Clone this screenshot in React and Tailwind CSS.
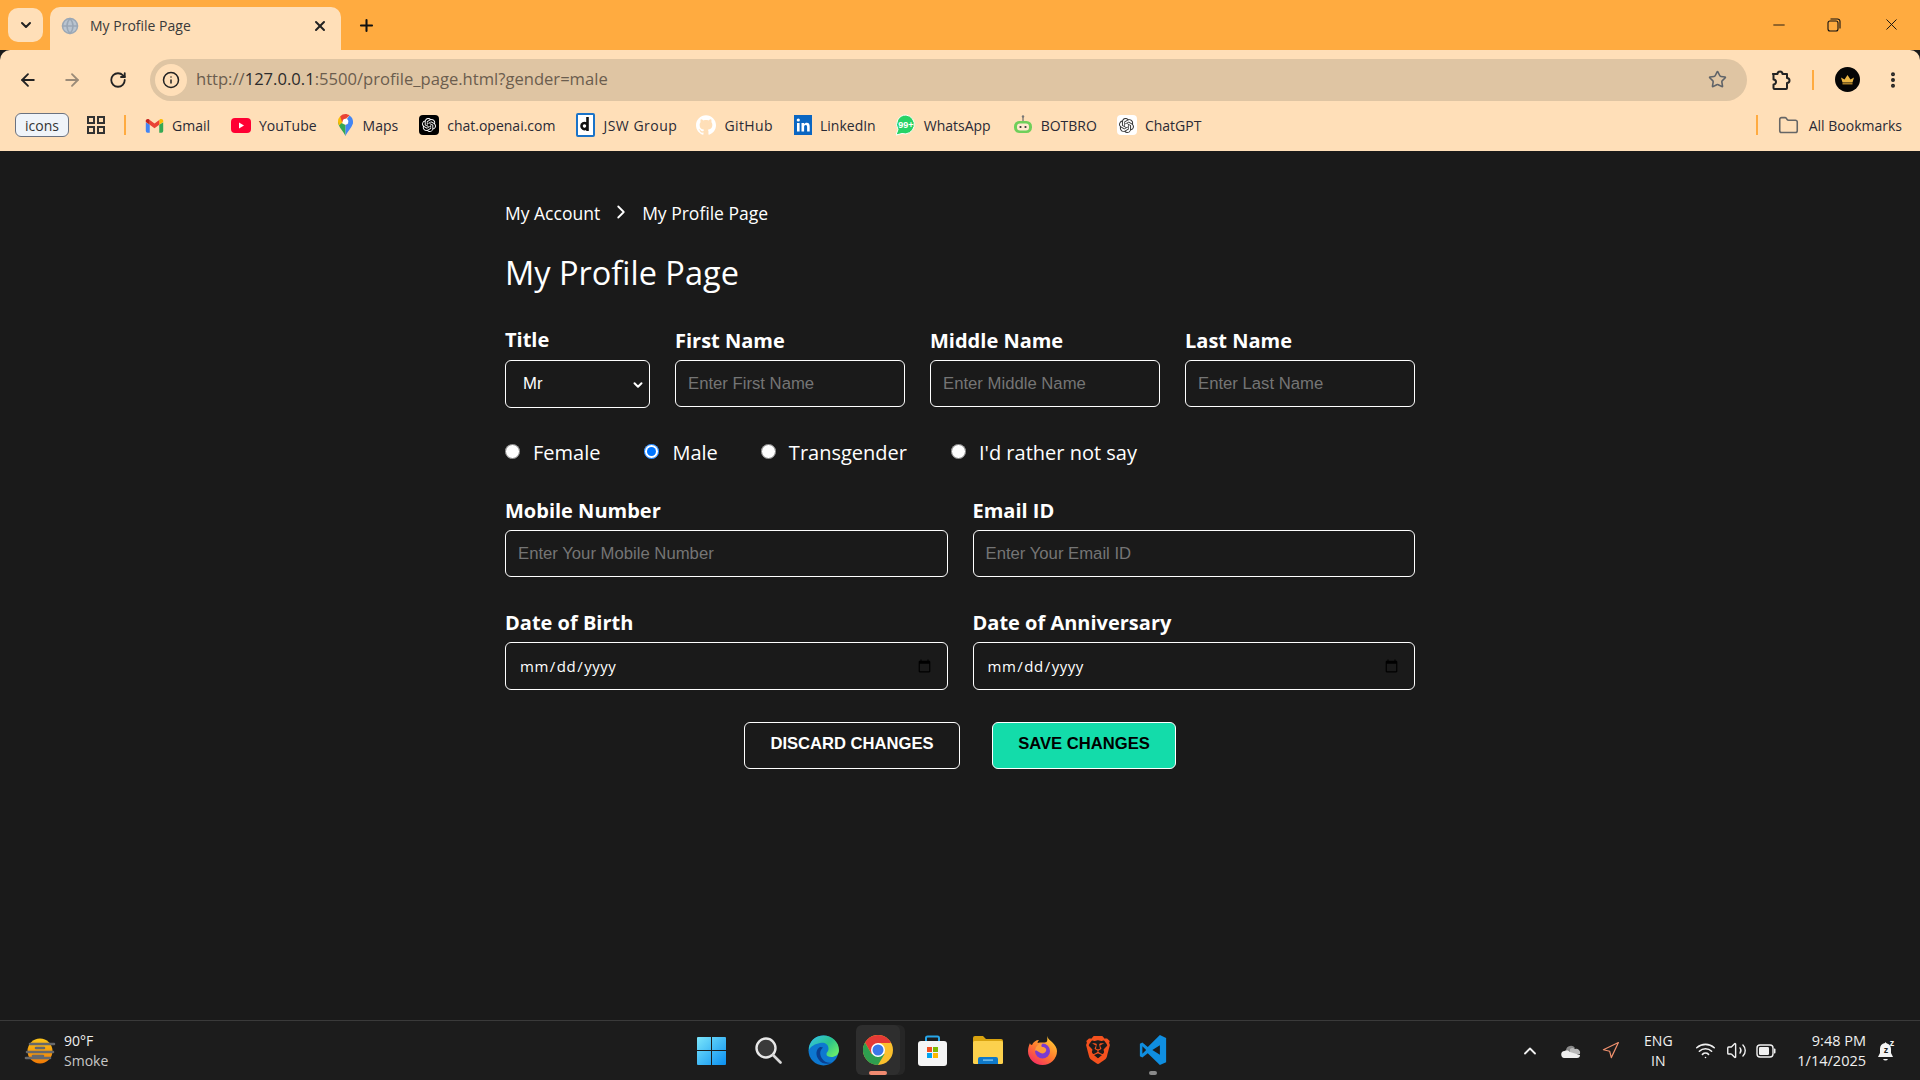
import React from "react";
import { SiOpenai, SiGithub, SiBrave } from "react-icons/si";
import { ArrowLeft, ArrowRight, RotateCw, Info, Star, EllipsisVertical, Folder, ChevronDown, ChevronUp, ChevronRight, X, Plus, Minus, Wifi, Volume2, Navigation, Globe } from "lucide-react";

const sans = "font-['Open_Sans','Noto_Sans',sans-serif]";

function Gmail() {
  return (
    <svg width="19" height="15" viewBox="0 0 24 18">
      <path d="M1 5v11a2 2 0 0 0 2 2h3V8z" fill="#4285f4" />
      <path d="M23 5v11a2 2 0 0 1-2 2h-3V8z" fill="#34a853" />
      <path d="M18 2v6l5-3.5V3c0-2-2.3-3-4-1.8z" fill="#fbbc04" />
      <path d="M6 8V2l6 4.500L18 2v6l-6 4.500z" fill="#ea4335" />
      <path d="M1 3v1.500L6 8V2L5 1.200C3.300 0 1 1 1 3z" fill="#c5221f" />
    </svg>
  );
}
function YouTube() {
  return (
    <svg width="20" height="15" viewBox="0 0 20 15">
      <rect width="20" height="15" rx="4" fill="#ff0033" />
      <path d="M8 4.500l5 3-5 3z" fill="#fff" />
    </svg>
  );
}
function MapsPin() {
  return (
    <svg width="15" height="22" viewBox="0 0 15 22">
      <path d="M7.500 22C6 18 0 13 0 7.500L7.500 11z" fill="#34a853" />
      <path d="M7.500 22c1.500-4 7.500-9 7.500-14.500L7.500 11z" fill="#4285f4" />
      <path d="M2.200 2.200A7.500 7.500 0 0 0 0 7.500c0 1.500.5 2.800 1.200 4L7.500 5z" fill="#fbbc04" />
      <path d="M2.200 2.200A7.500 7.500 0 0 1 7.500 0c1 0 3 .5 4 1.500L4 8z" fill="#ea4335" />
      <path d="M11.500 1.500A7.500 7.500 0 0 1 15 7.500c0 2-1 3.500-2 5L7.500 7z" fill="#4285f4" />
      <circle cx="7.500" cy="7.500" r="2.800" fill="#fff" />
    </svg>
  );
}
function Jsw() {
  return (
    <svg width="19" height="24" viewBox="0 0 19 24">
      <rect x="1" y="1" width="17" height="22" rx="1" fill="#fff" stroke="#1a73c8" strokeWidth="2" />
      <path d="M11.500 4v14M11.500 13a3 3 0 1 0 0 .1" fill="none" stroke="#111" strokeWidth="2.600" />
    </svg>
  );
}
function Linkedin() {
  return (
    <svg width="18" height="20" viewBox="0 0 18 20">
      <rect width="18" height="20" fill="#0a66c2" />
      <rect x="3" y="8" width="2.600" height="8.500" fill="#fff" />
      <circle cx="4.300" cy="5" r="1.600" fill="#fff" />
      <path d="M7.500 8h2.500v1.300c.6-1 1.600-1.500 2.700-1.500 2.300 0 3 1.500 3 3.700v5h-2.600v-4.500c0-1.100-.3-2-1.400-2s-1.600.9-1.600 2v4.500H7.500z" fill="#fff" />
    </svg>
  );
}
function WhatsApp() {
  return (
    <svg width="20" height="22" viewBox="0 0 20 22">
      <path d="M10 1a9.500 9.500 0 0 0-8 14.500L0 21l6-1.500A9.500 9.500 0 1 0 10 1z" fill="#25d366" stroke="#fff" strokeWidth="1" />
      <text x="10" y="14" textAnchor="middle" fontSize="9" fontWeight="700" fill="#fff" fontFamily="Liberation Sans">99+</text>
    </svg>
  );
}
function Botbro() {
  return (
    <svg width="20" height="20" viewBox="0 0 20 20">
      <path d="M10 1v5" stroke="#555" strokeWidth="1" />
      <circle cx="10" cy="1.500" r="1.200" fill="#777" />
      <rect x="1" y="6" width="18" height="12" rx="5.500" fill="#6fcf5a" />
      <rect x="4" y="8.500" width="12" height="7" rx="3" fill="#ffe9cf" />
      <circle cx="7.500" cy="12" r="1.100" fill="#333" />
      <circle cx="12.500" cy="12" r="1.100" fill="#333" />
    </svg>
  );
}
function Crown() {
  return (
    <svg width="25" height="25" viewBox="0 0 25 25">
      <circle cx="12.500" cy="12.500" r="12.500" fill="#050505" />
      <path d="M6 10.500l3.500 2L12.500 8l3 4.500 3.500-2-1.500 5h-10z" fill="#eab543" />
      <rect x="7.500" y="16" width="10" height="1.500" fill="#a87d28" />
    </svg>
  );
}
function ExtensionIcon() {
  return (
    <svg width="22" height="22" viewBox="0 0 22 22" fill="none" stroke="#222" strokeWidth="2" strokeLinejoin="round">
      <path d="M3 5h4.500a2.500 2.500 0 0 1 5 0H17v4a2.500 2.500 0 0 1 0 5v5a1 1 0 0 1-1 1H4.500a1 1 0 0 1-1-1v-3.500a2.500 2.500 0 0 0 0-5V6z" />
    </svg>
  );
}
function Weather() {
  return (
    <svg width="32" height="28" viewBox="0 0 32 28">
      <defs>
        <linearGradient id="sun" x1="0" y1="0" x2="0" y2="1">
          <stop offset="0" stopColor="#fcc419" />
          <stop offset="1" stopColor="#f07a06" />
        </linearGradient>
      </defs>
      <circle cx="16" cy="14" r="12.500" fill="url(#sun)" />
      <g fill="none" stroke="#66686c" strokeWidth="2.600" strokeLinecap="round">
        <path d="M6 7h24M12 11h8" />
        <path d="M3 15h26M9 19h10" />
        <path d="M2 21h24" />
      </g>
    </svg>
  );
}
function WinLogo() {
  return (
    <svg width="29" height="29" viewBox="0 0 29 29">
      <defs>
        <linearGradient id="win" x1="0" y1="0" x2="1" y2="1">
          <stop offset="0" stopColor="#7be6fb" />
          <stop offset="1" stopColor="#0a8ff0" />
        </linearGradient>
      </defs>
      <path d="M1 1h13v13H0V2a1 1 0 0 1 1-1zM15 1h13a1 1 0 0 1 1 1v12H15zM0 15h14v14H1a1 1 0 0 1-1-1zM15 15h14v13a1 1 0 0 1-1 1H15z" fill="url(#win)" />
    </svg>
  );
}
function SearchIcon() {
  return (
    <svg width="28" height="28" viewBox="0 0 28 28">
      <circle cx="12" cy="12" r="9.500" fill="#3a3a3a" stroke="#e8e8e8" strokeWidth="2.400" />
      <path d="M19 19l7.500 7.500" stroke="#d8d8d8" strokeWidth="2.600" strokeLinecap="round" />
    </svg>
  );
}
function Edge() {
  return (
    <svg width="31" height="31" viewBox="0 0 31 31">
      <defs>
        <linearGradient id="edgeA" x1="0" y1="0" x2="1" y2="0.700">
          <stop offset="0" stopColor="#35c1f1" />
          <stop offset="0.600" stopColor="#2bc48a" />
          <stop offset="1" stopColor="#66eb6e" />
        </linearGradient>
      </defs>
      <circle cx="15.500" cy="15.500" r="15" fill="#0d78d0" />
      <path d="M1 12C3 4 9 .5 15.500 .5 24 .5 31 7 31 15c0 5-4 7-7.500 7-3 0-5-1-5-2.500 0-3 2-2.500 2-6C20.500 9 16 7 12 8 7 9 3 11 1 15z" fill="url(#edgeA)" />
      <path d="M12 12c-4 2-5 8-1 13 3 4 9 5 14 2.500-5 1-9-.5-11-4-2.500-4-2.500-8 1-11-1-.5-2-.7-3-.5z" fill="#0a3f8f" />
    </svg>
  );
}
function Chrome() {
  return (
    <svg width="30" height="30" viewBox="0 0 30 30">
      <circle cx="15" cy="15" r="15" fill="#fbc02d" />
      <path d="M15 0a15 15 0 0 0-13 7.500L8.500 19 15 8h13A15 15 0 0 0 15 0z" fill="#e53935" />
      <path d="M2 7.500A15 15 0 0 0 15 30l6.500-11-13 0z" fill="#2e9e4f" />
      <circle cx="15" cy="15" r="7" fill="#fff" />
      <circle cx="15" cy="15" r="5.500" fill="#3b78e7" />
    </svg>
  );
}
function Store() {
  return (
    <svg width="29" height="31" viewBox="0 0 29 31">
      <path d="M8 8V3a1.500 1.500 0 0 1 1.500-1.500h10A1.500 1.500 0 0 1 21 3v5" fill="none" stroke="#27a5e8" strokeWidth="2" />
      <rect y="6" width="29" height="25" rx="3" fill="#f5f5f5" />
      <rect x="9" y="12" width="5" height="5" fill="#f25022" />
      <rect x="15" y="12" width="5" height="5" fill="#7fba00" />
      <rect x="9" y="18" width="5" height="5" fill="#00a4ef" />
      <rect x="15" y="18" width="5" height="5" fill="#ffb900" />
    </svg>
  );
}
function FileFolder() {
  return (
    <svg width="30" height="28" viewBox="0 0 30 28">
      <path d="M0 2a2 2 0 0 1 2-2h8l3 3h15a2 2 0 0 1 2 2v3H0z" fill="#d9a30f" />
      <rect y="5" width="30" height="23" rx="1.500" fill="#fcd14d" />
      <path d="M5 28v-5a2 2 0 0 1 2-2h16a2 2 0 0 1 2 2v5z" fill="#0f79c9" />
      <rect x="10" y="23.500" width="10" height="1.200" fill="#8fd0f5" />
    </svg>
  );
}
function Firefox() {
  return (
    <svg width="29" height="29" viewBox="0 0 29 29">
      <defs>
        <linearGradient id="ff" x1="0.800" y1="0" x2="0.100" y2="1">
          <stop offset="0" stopColor="#ffcf33" />
          <stop offset="0.500" stopColor="#ff7a2e" />
          <stop offset="1" stopColor="#f5206b" />
        </linearGradient>
      </defs>
      <path d="M19 0c1 3 3 4 5 6 3 3 5 6 5 9a14.500 14 0 1 1-29 0c0-3 1-6 2-8 0 1 1 2 2 2 1-3 4-5 7-5-1 1-1.500 2-1.500 3 3-1 7 0 9-1 1-1 1-3 .5-6z" fill="url(#ff)" />
      <circle cx="14.500" cy="15" r="7.500" fill="#7b3bd0" />
      <path d="M7 15c0-4 3-8 8-8-2 2-2 3-1 4 3 0 5 2 4 4-1 3-5 3-7 1-2-1-3-2-4-1z" fill="#ff9b3a" />
    </svg>
  );
}
function VsCode() {
  return (
    <svg width="30" height="30" viewBox="0 0 24 24">
      <path d="M17.500 0 7.800 9.500 3.500 6 1.500 7v10l2 1 4.300-3.500L17.500 24l5-2.300V2.300zM3.500 15V9l3 3zm14 .8L11.500 12l6-3.800z" fill="#0f8ee0" />
    </svg>
  );
}
function Onedrive() {
  return (
    <svg width="20" height="14" viewBox="0 0 20 14">
      <path d="M5 6a5 5 0 0 1 9-2l-5 4z" fill="#8a8a8a" />
      <path d="M9 5a4 4 0 0 1 5 0 4 4 0 0 1 5 5H9z" fill="#b8b8b8" />
      <path d="M4 14a3.500 3.500 0 0 1-.5-7C5 6 7 6 9 8l10 3c0 2-1 3-3 3z" fill="#eeeeee" />
    </svg>
  );
}
function Battery() {
  return (
    <svg width="20" height="14" viewBox="0 0 20 14">
      <rect x="1" y="1" width="16" height="12" rx="3" fill="none" stroke="#f0f0f0" strokeWidth="1.400" />
      <rect x="3" y="3" width="10" height="8" rx="1.200" fill="#f0f0f0" />
      <path d="M18 4.500h.5a1 1 0 0 1 1 1v3a1 1 0 0 1-1 1H18z" fill="#f0f0f0" />
    </svg>
  );
}
function Bell() {
  return (
    <svg width="19" height="24" viewBox="0 0 19 24">
      <path d="M8 4a6 6 0 0 0-5 6v4l-2 4h15l-2-4v-4a6 6 0 0 0-4-5.500L8 3z" fill="#f5f5f5" />
      <path d="M6 20a2.800 2.800 0 0 0 5 0z" fill="#f5f5f5" />
      <text x="9" y="14" textAnchor="middle" fontSize="9" fontWeight="700" fill="#1c1c1c" fontFamily="Liberation Sans">z</text>
      <text x="15" y="7" textAnchor="middle" fontSize="9" fontWeight="700" fill="#f5f5f5" fontFamily="Liberation Sans">z</text>
    </svg>
  );
}

const bookmarks = [
  { label: "Gmail", icon: <Gmail />, gap: "mr-[21px]" },
  { label: "YouTube", icon: <YouTube />, gap: "mr-[21px]" },
  { label: "Maps", icon: <MapsPin />, gap: "mr-[21px]", iconPad: "pr-[2px]" },
  { label: "chat.openai.com", icon: <span className="flex h-5 w-5 items-center justify-center rounded-[4px] bg-black text-white"><SiOpenai size={14} /></span>, gap: "mr-[21px]" },
  { label: "JSW Group", icon: <Jsw />, gap: "mr-[19px]", text: "tracking-[0.5px]" },
  { label: "GitHub", icon: <span className="flex h-5 w-5 items-center justify-center rounded-full text-white"><SiGithub size={20} /></span>, gap: "mr-[21px]", text: "tracking-[0.4px]" },
  { label: "LinkedIn", icon: <Linkedin />, gap: "mr-[20px]" },
  { label: "WhatsApp", icon: <WhatsApp />, gap: "mr-[22px]" },
  { label: "BOTBRO", icon: <Botbro />, gap: "mr-[20px]" },
  { label: "ChatGPT", icon: <span className="flex h-5 w-5 items-center justify-center rounded-[4px] bg-white text-[#333]"><SiOpenai size={15} /></span>, gap: "" },
];

function Field({ label, className, labelClass = "mb-[7px]", children }) {
  return (
    <div className={className}>
      <label className={`block text-[20px] font-bold leading-[24px] text-white ${labelClass}`}>{label}</label>
      {children}
    </div>
  );
}

const inputClass = "block h-[47px] w-full rounded-[6px] border border-white bg-transparent px-[12px] font-['Liberation_Sans',sans-serif] text-[16.700px] text-white outline-none placeholder:text-[#757575]";
const dateClass = "block h-[48px] w-full rounded-[6px] border border-white bg-transparent px-[13px] font-['Open_Sans',sans-serif] text-[15px] font-medium tracking-[0.5px] text-white outline-none";

function TextInput({ placeholder }) {
  return <input type="text" placeholder={placeholder} className={inputClass} />;
}

function Radio({ label, checked, className }) {
  return (
    <label className={`flex items-center ${className}`}>
      <input type="radio" name="gender" defaultChecked={checked} className="m-0 h-[15px] w-[15px] -translate-y-[2px]" />
      <span className="ml-[13px] text-[20px] leading-[28px] text-white">{label}</span>
    </label>
  );
}

export default function App() {
  return (
    <div className={`flex h-[1080px] w-[1920px] flex-col overflow-hidden bg-[#1a1a1a] ${sans}`}>
      {/* tab strip */}
      <div className="relative flex h-[50px] shrink-0 items-end bg-[#ffab40] pl-2">
        <div className="mb-2 flex h-[34px] w-[35px] items-center justify-center rounded-[10px] bg-[#ffdfb8] text-[#222]">
          <ChevronDown size={16} strokeWidth={3} />
        </div>
        <div className="ml-[7px] flex h-[43px] w-[291px] items-center rounded-t-[10px] bg-[#ffdfb8] pb-[6px] pl-[11px] pr-[13px]">
          <Globe size={18} className="text-[#9aa7b5]" fill="#b9c4d0" />
          <span className="ml-[11px] flex-1 text-[14px] text-[#3a3a3a]">My Profile Page</span>
          <X size={16} strokeWidth={3} className="text-[#222]" />
        </div>
        <Plus size={19} strokeWidth={2.600} className="mb-[15px] ml-4 text-[#111]" />
        <div className="ml-auto mb-4 flex items-center text-[#111]">
          <Minus size={18} strokeWidth={1.200} />
          <svg width="14" height="14" viewBox="0 0 14 14" className="ml-[39px]" fill="none" stroke="#111" strokeWidth="1.100">
            <rect x="1" y="3" width="10" height="10" rx="2" />
            <path d="M3.500 1h7a2.500 2.500 0 0 1 2.500 2.500v7" />
          </svg>
          <X size={19} strokeWidth={1.200} className="ml-[41px] mr-[19px]" />
        </div>
      </div>

      {/* toolbar */}
      <div className="flex h-[58px] shrink-0 items-center rounded-t-[10px] bg-[#ffdfb8] pl-[18px] pr-[17px] pt-[1px]">
        <ArrowLeft size={20} strokeWidth={2.200} className="text-[#222]" />
        <ArrowRight size={20} strokeWidth={2.200} className="ml-[24px] text-[#9b8b78]" />
        <RotateCw size={18} strokeWidth={2.400} className="ml-[27px] text-[#222]" />
        <div className="ml-[23px] flex h-[42px] w-[1598px] items-center rounded-full bg-[#dfc5a3] pl-[5px] pr-[20px]">
          <div className="flex h-8 w-8 items-center justify-center rounded-full bg-[#ffdfb8]">
            <Info size={18} strokeWidth={2} className="text-[#222]" />
          </div>
          <span className="ml-[9px] flex-1 text-[16.600px] text-[#6b5d4e]">
            http://<span className="text-[#2b2b2b]">127.0.0.1</span>:5500/profile_page.html?gender=male
          </span>
          <Star size={19} strokeWidth={2} className="text-[#5f6368]" />
        </div>
        <div className="ml-[23px] flex"><ExtensionIcon /></div>
        <div className="ml-[20px] h-5 w-[2px] bg-[#ffab40]" />
        <div className="ml-[21px] flex"><Crown /></div>
        <EllipsisVertical size={20} strokeWidth={2.800} className="ml-[23px] text-[#222]" />
      </div>

      {/* bookmarks */}
      <div className="flex h-[43px] shrink-0 items-center bg-[#ffdfb8] pb-[9px] pl-[15px] pr-[18px]">
        <div className="flex h-[24px] w-[54px] items-center justify-center rounded-[6px] border border-[#6b7280] bg-[#f0f4f9] text-[14px] text-[#333]">icons</div>
        <svg width="18" height="18" viewBox="0 0 18 18" className="ml-[18px]" fill="none" stroke="#333" strokeWidth="2">
          <rect x="1" y="1" width="6" height="6" />
          <rect x="11" y="1" width="6" height="6" />
          <rect x="1" y="11" width="6" height="6" />
          <rect x="11" y="11" width="6" height="6" />
        </svg>
        <div className="ml-[19px] mr-[19px] h-[20px] w-[2px] bg-[#ffab40]" />
        {bookmarks.map((b) => (
          <div key={b.label} className={`flex items-center ${b.gap}`}>
            <span className={`flex h-6 items-center justify-center ${b.iconPad || ""}`}>{b.icon}</span>
            <span className={`ml-2 text-[14px] text-[#2a2a35] ${b.text || ""}`}>{b.label}</span>
          </div>
        ))}
        <div className="ml-auto h-[20px] w-[2px] bg-[#ffab40]" />
        <Folder size={21} strokeWidth={1.800} className="ml-[20px] text-[#666]" />
        <span className="ml-[10px] text-[14px] text-[#2a2a35]">All Bookmarks</span>
      </div>

      {/* page */}
      <main className="flex-1 bg-[#1a1a1a]">
        <div className="mx-auto w-[910px] pt-[49px]">
          <div className="flex h-[26px] items-center text-[17.500px] text-white">
            <span>My Account</span>
            <ChevronRight size={22} strokeWidth={2} className="mx-[10px] -translate-y-[1px]" />
            <span>My Profile Page</span>
          </div>
          <h1 className="mt-[25px] text-[32.500px] leading-[44px] text-white">My Profile Page</h1>

          <div className="mt-[34px] flex gap-[25px]">
            <Field label="Title" className="w-[145px]" labelClass="mb-[8px] -mt-[1px]">
              <div className="relative">
                <select className="block h-[48px] w-full appearance-none rounded-[6px] border border-white bg-[#1a1a1a] pl-[17px] font-['Liberation_Sans',sans-serif] text-[16.700px] text-white outline-none">
                  <option>Mr</option>
                </select>
                <ChevronDown size={14} strokeWidth={3.400} className="pointer-events-none absolute right-[5px] top-[18px] text-white" />
              </div>
            </Field>
            <Field label="First Name" className="w-[230px]"><TextInput placeholder="Enter First Name" /></Field>
            <Field label="Middle Name" className="w-[230px]"><TextInput placeholder="Enter Middle Name" /></Field>
            <Field label="Last Name" className="w-[230px]"><TextInput placeholder="Enter Last Name" /></Field>
          </div>

          <div className="mt-[31px] flex">
            <Radio label="Female" className="mr-[44px]" />
            <Radio label="Male" checked className="mr-[43px]" />
            <Radio label="Transgender" className="mr-[44px]" />
            <Radio label="I'd rather not say" />
          </div>

          <div className="mt-[32px] flex gap-[25px]">
            <Field label="Mobile Number" className="flex-1"><TextInput placeholder="Enter Your Mobile Number" /></Field>
            <Field label="Email ID" className="flex-1"><TextInput placeholder="Enter Your Email ID" /></Field>
          </div>

          <div className="mt-[34px] flex gap-[25px]">
            <Field label="Date of Birth" className="flex-1">
              <input type="date" className={dateClass} />
            </Field>
            <Field label="Date of Anniversary" className="flex-1">
              <input type="date" className={dateClass} />
            </Field>
          </div>

          <div className="mt-[32px] flex justify-center gap-8 font-['Liberation_Sans',sans-serif]">
            <button className="h-[47px] w-[216px] rounded-[6px] border border-white bg-transparent pb-[2px] text-[16.600px] font-bold text-white">DISCARD CHANGES</button>
            <button className="h-[47px] w-[184px] rounded-[6px] border border-white bg-[#13dcaa] pb-[2px] text-[16.600px] font-bold text-black">SAVE CHANGES</button>
          </div>
        </div>
      </main>

      {/* taskbar */}
      <footer className="relative flex h-[60px] shrink-0 items-center border-t border-[#3a3a3a] bg-[#1c1c1c] pl-[24px] pr-[24px] text-[#f0f0f0]">
        <Weather />
        <div className="ml-[8px] flex flex-col text-[14px] leading-[20px]">
          <span>90°F</span>
          <span className="text-[#c8c8c8]">Smoke</span>
        </div>

        <div className="absolute left-[697px] top-0 flex h-full items-center pb-[1px]">
          <WinLogo />
          <div className="ml-[28px]"><SearchIcon /></div>
          <div className="ml-[26px]"><Edge /></div>
          <div className="relative ml-[17px] flex h-[50px] w-[44px] items-center justify-center rounded-[6px] bg-[#2e2e2e] shadow-[5px_0_0_#262626]">
            <Chrome />
            <div className="absolute bottom-0 h-1 w-[18px] rounded-full bg-[#f08a70]" />
          </div>
          <div className="ml-[18px]"><Store /></div>
          <div className="ml-[26px]"><FileFolder /></div>
          <div className="ml-[25px]"><Firefox /></div>
          <div className="ml-[27px] flex text-[#f4511e]"><SiBrave size={28} /></div>
          <div className="relative ml-[26px] flex h-[50px] items-center">
            <VsCode />
            <div className="absolute bottom-0 left-[11px] h-1 w-2 rounded-full bg-[#8a8a8a]" />
          </div>
        </div>

        <div className="ml-auto flex items-center">
          <ChevronUp size={20} strokeWidth={2.200} />
          <div className="ml-[21px]"><Onedrive /></div>
          <Navigation size={19} strokeWidth={1.500} className="ml-[20px] text-[#f0916e]" />
          <div className="ml-[18px] flex w-[40px] flex-col items-center text-[14px] leading-[20px]">
            <span>ENG</span>
            <span>IN</span>
          </div>
          <Wifi size={21} strokeWidth={1.800} className="ml-[17px]" />
          <Volume2 size={21} strokeWidth={1.600} className="ml-[10px]" />
          <div className="ml-[9px] flex"><Battery /></div>
          <div className="ml-[21px] flex flex-col items-end text-[14.500px] leading-[20px]">
            <span>9:48 PM</span>
            <span>1/14/2025</span>
          </div>
          <div className="ml-[11px]"><Bell /></div>
        </div>
      </footer>
    </div>
  );
}
